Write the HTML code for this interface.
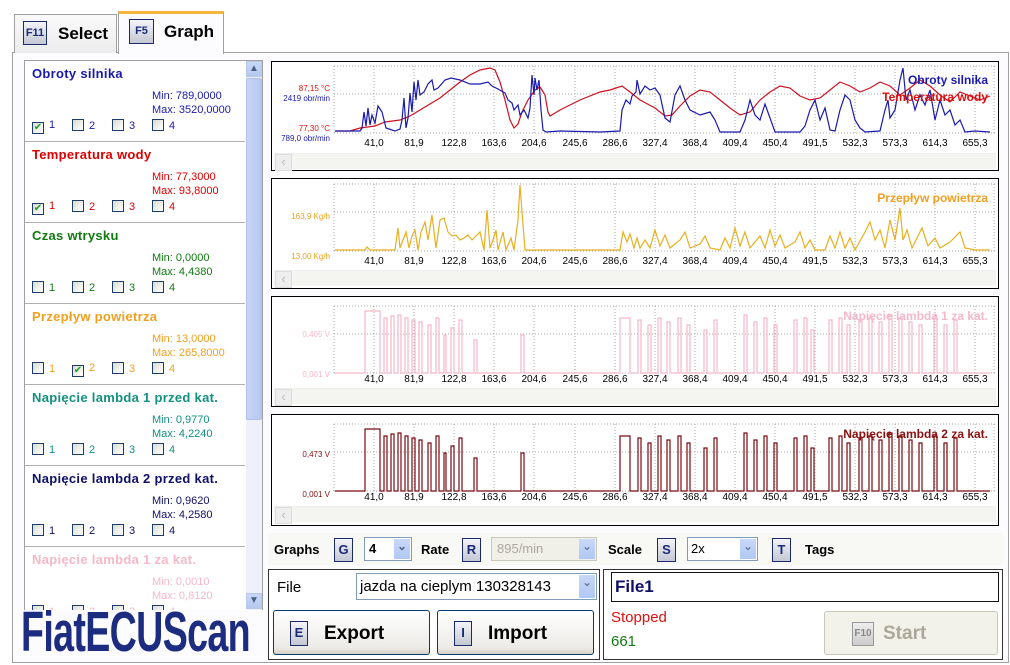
<!DOCTYPE html>
<html><head><meta charset="utf-8"><style>
*{margin:0;padding:0;box-sizing:border-box}
body{width:1010px;height:664px;background:#fff;font-family:"Liberation Sans",Arial,sans-serif;position:relative;overflow:hidden}
.a{position:absolute}
.tab{position:absolute;border:1px solid #a0a0a0;border-bottom:none;background:linear-gradient(#fafafa,#ececec);font-weight:bold;font-size:17px}
.key{position:absolute;border:1px solid #1a2a6a;background:linear-gradient(#f4f4f8,#c4c8d4);font-weight:bold;color:#1a2a7a;text-align:center;font-size:11px}
.item{position:absolute;left:25px;width:220px;height:81px;border-bottom:1px solid #b0b0b0;background:#fff}
.item .t{position:absolute;left:7px;top:5px;font-weight:bold;font-size:13px;letter-spacing:.3px}
.item .m{position:absolute;left:127px;top:28px;font-size:11px;line-height:14px}
.cb{position:absolute;top:58px;font-size:11px}
.cb i{display:inline-block;width:12px;height:12px;border:1px solid #1c3c6c;background:linear-gradient(135deg,#dcdcd4,#fff);vertical-align:-2px;margin-right:5px;font-style:normal;font-size:10px;line-height:10px;color:#21a121;text-align:center}
.chart{position:absolute;left:271px;width:728px;border:1px solid #000;background:#fff}
.sb{position:absolute;left:2px;right:2px;height:16px;background:#f4f4f0;border-top:1px solid #eee}
.sb:before{content:"‹";position:absolute;left:1px;top:0;width:15px;height:15px;border:1px solid #ddd;background:#eee;color:#bbb;font-size:13px;line-height:13px;text-align:center}
.sel{position:absolute;border:1px solid #7f9db9;background:#fff;font-size:13px}
.sel:after{content:"⌄";position:absolute;right:1px;top:1px;bottom:1px;width:16px;background:linear-gradient(#c8d8f8,#b0c8f4);color:#4d6185;font-size:12px;text-align:center;line-height:14px}
.btn{position:absolute;border:1px solid #003c74;border-radius:3px;background:linear-gradient(#fff,#ecebe6 85%,#d6d0c5);font-weight:bold;font-size:19px}
.lab{position:absolute;font-weight:bold;font-size:13px;top:542px}
</style></head><body>
<div class="a" style="left:12px;top:52px;width:997px;height:611px;border:1px solid #a0a0a0;background:#fcfcfe"></div>
<div class="tab" style="left:14px;top:14px;width:103px;height:39px"><div class="key" style="left:8px;top:6px;width:24px;height:24px;line-height:22px">F11</div><span class="a" style="left:43px;top:9px">Select</span></div>
<div class="tab" style="left:118px;top:11px;width:106px;height:43px;background:#fcfcfe;border-top:3px solid #f4b63c"><div class="key" style="left:10px;top:5px;width:25px;height:25px;line-height:22px">F5</div><span class="a" style="left:45px;top:8px">Graph</span></div>
<div class="a" style="left:24px;top:60px;width:239px;height:551px;border:1px solid #a0a0a0;background:#fff;overflow:hidden"></div>
<div class="a" style="left:246px;top:61px;width:16px;height:549px;background:#eef1fb"></div>
<div class="a" style="left:246px;top:61px;width:16px;height:16px;background:linear-gradient(#c8d8f8,#b4c8f0);border:1px solid #b8c8ea;color:#4d6185;font-size:10px;text-align:center;line-height:14px">▲</div>
<div class="a" style="left:246px;top:78px;width:16px;height:342px;background:linear-gradient(90deg,#c6d4f7,#b6c8f2);border:1px solid #b0c0e6;border-radius:2px"></div>
<div class="a" style="left:246px;top:593px;width:16px;height:16px;background:linear-gradient(#c8d8f8,#b4c8f0);border:1px solid #b8c8ea;color:#4d6185;font-size:10px;text-align:center;line-height:14px">▼</div>

<div class="item" style="top:61px;color:#1a1aa8"><div class="t">Obroty silnika</div><div class="m">Min: 789,0000<br>Max: 3520,0000</div><div class="cb" style="left:7px"><i>✔</i>1</div><div class="cb" style="left:47px"><i></i>2</div><div class="cb" style="left:87px"><i></i>3</div><div class="cb" style="left:127px"><i></i>4</div></div>
<div class="item" style="top:142px;color:#dd0000"><div class="t">Temperatura wody</div><div class="m">Min: 77,3000<br>Max: 93,8000</div><div class="cb" style="left:7px"><i>✔</i>1</div><div class="cb" style="left:47px"><i></i>2</div><div class="cb" style="left:87px"><i></i>3</div><div class="cb" style="left:127px"><i></i>4</div></div>
<div class="item" style="top:223px;color:#107a10"><div class="t">Czas wtrysku</div><div class="m">Min: 0,0000<br>Max: 4,4380</div><div class="cb" style="left:7px"><i></i>1</div><div class="cb" style="left:47px"><i></i>2</div><div class="cb" style="left:87px"><i></i>3</div><div class="cb" style="left:127px"><i></i>4</div></div>
<div class="item" style="top:304px;color:#f0a020"><div class="t">Przepływ powietrza</div><div class="m">Min: 13,0000<br>Max: 265,8000</div><div class="cb" style="left:7px"><i></i>1</div><div class="cb" style="left:47px"><i>✔</i>2</div><div class="cb" style="left:87px"><i></i>3</div><div class="cb" style="left:127px"><i></i>4</div></div>
<div class="item" style="top:385px;color:#129080"><div class="t">Napięcie lambda 1 przed kat.</div><div class="m">Min: 0,9770<br>Max: 4,2240</div><div class="cb" style="left:7px"><i></i>1</div><div class="cb" style="left:47px"><i></i>2</div><div class="cb" style="left:87px"><i></i>3</div><div class="cb" style="left:127px"><i></i>4</div></div>
<div class="item" style="top:466px;color:#101068"><div class="t">Napięcie lambda 2 przed kat.</div><div class="m">Min: 0,9620<br>Max: 4,2580</div><div class="cb" style="left:7px"><i></i>1</div><div class="cb" style="left:47px"><i></i>2</div><div class="cb" style="left:87px"><i></i>3</div><div class="cb" style="left:127px"><i></i>4</div></div>
<div class="item" style="top:547px;height:63px;border:none;color:#f5b8c8;overflow:hidden"><div class="t">Napięcie lambda 1 za kat.</div><div class="m">Min: 0,0010<br>Max: 0,8120</div><div class="cb" style="left:7px"><i></i>1</div><div class="cb" style="left:47px"><i></i>2</div><div class="cb" style="left:87px"><i></i>3</div><div class="cb" style="left:127px"><i></i>4</div></div>
<div class="a" style="left:14px;top:610px;width:250px;height:52px;background:#fcfcfe"></div>
<div class="a" style="left:21px;top:599px;font-size:57px;font-weight:bold;color:#1c2c80;transform:scaleX(.66);transform-origin:0 0;letter-spacing:-1px;white-space:nowrap">FiatECUScan</div>

<div class="chart" style="top:61px;height:110px"><div class="sb" style="top:91px"></div></div>
<div class="chart" style="top:178px;height:111px"><div class="sb" style="top:91px"></div></div>
<div class="chart" style="top:296px;height:111px"><div class="sb" style="top:91px"></div></div>
<div class="chart" style="top:414px;height:112px"><div class="sb" style="top:91px"></div></div>

<svg class="a" style="left:0;top:0" width="1010" height="664" font-family="Liberation Sans, Arial, sans-serif">
<defs>
<g id="grid" stroke="#a8a8a8" stroke-width="1" stroke-dasharray="1,2" fill="none">
<path d="M334,0V67M374,0V67M414,0V67M454,0V67M494,0V67M534,0V67M575,0V67M615,0V67M655,0V67M695,0V67M735,0V67M775,0V67M815,0V67M855,0V67M895,0V67M935,0V67M975,0V67M994,0V67M334,0H995M334,28H995M334,67H995"/>
</g>
<path id="pulse" d="M335,373 H365 V311 H380 V373 H384 V318 H387 V373 H391 V316 H394 V373 H398 V315 H401 V373 H405 V318 H408 V373 H412 V320 H415 V373 H419 V322 H422 V373 H428 V325 H431 V373 H436 V318 H439 V373 H444 V335 H446 V373 H451 V328 H454 V373 H459 V320 H462 V373 H474 V340 H477 V373 H521 V335 H524 V373 H620 V318 H630 V373 H638 V320 H641 V373 H648 V325 H651 V373 H658 V318 H661 V373 H667 V322 H670 V373 H678 V318 H681 V373 H687 V325 H690 V373 H704 V330 H707 V373 H714 V320 H717 V373 H744 V315 H747 V373 H754 V322 H757 V373 H764 V318 H767 V373 H774 V325 H777 V373 H794 V320 H797 V373 H804 V318 H807 V373 H811 V330 H814 V373 H829 V320 H832 V373 H839 V318 H842 V373 H847 V325 H850 V373 H859 V320 H862 V373 H869 V318 H872 V373 H879 V322 H882 V373 H889 V315 H892 V373 H899 V318 H902 V373 H909 V322 H912 V373 H919 V325 H922 V373 H934 V318 H937 V373 H944 V325 H947 V373 H954 V320 H957 V373 H990" fill="none"/>
</defs>
<use href="#grid" transform="translate(0,66)"/>
<use href="#grid" transform="translate(0,184)"/>
<use href="#grid" transform="translate(0,306)"/>
<use href="#grid" transform="translate(0,424)"/>
<g fill="none" stroke-width="1.2">
<path stroke="#cc1020" d="M335,131 L350,131 L360,128 L375,126 L385,122 L400,120 L410,116 L420,110 L430,104 L440,98 L450,90 L460,82 L470,75 L480,70 L490,68 L495,70 L500,82 L505,100 L510,120 L514,128 L518,124 L522,112 L528,100 L535,90 L540,87 L545,95 L548,112 L550,116 L560,110 L580,100 L600,92 L610,90 L622,86 L630,92 L640,100 L655,108 L665,116 L672,115 L680,106 L690,96 L700,90 L710,92 L720,100 L730,108 L740,115 L750,112 L760,100 L770,92 L780,86 L790,88 L800,96 L810,100 L820,98 L830,90 L840,82 L850,86 L860,92 L870,88 L880,82 L890,86 L900,95 L910,88 L920,80 L930,86 L940,95 L950,102 L960,92 L970,96 L980,100 L990,96"/>
<path stroke="#1a1ab0" d="M335,131 L360,131 L362,128 L364,112 L366,126 L368,108 L370,125 L372,115 L375,123 L378,106 L382,112 L386,128 L395,131 L400,129 L402,120 L404,98 L406,128 L408,118 L410,93 L412,112 L414,82 L416,100 L418,80 L420,95 L424,92 L428,84 L432,80 L434,90 L438,88 L445,80 L451,78 L460,80 L470,84 L480,84 L488,82 L492,86 L498,89 L505,93 L508,100 L512,103 L514,110 L518,105 L520,115 L524,110 L528,118 L530,108 L532,75 L534,95 L535,78 L537,90 L539,80 L541,110 L543,130 L546,132 L560,131 L600,132 L620,131 L622,110 L626,100 L630,104 L632,96 L636,92 L637,80 L640,94 L645,86 L650,90 L655,88 L660,95 L665,118 L670,122 L675,95 L680,86 L685,100 L690,110 L700,115 L710,112 L715,120 L720,132 L740,132 L745,120 L750,100 L755,115 L760,120 L765,104 L770,118 L775,132 L800,132 L805,126 L810,110 L815,100 L820,120 L825,108 L830,130 L835,131 L840,110 L845,95 L850,100 L855,120 L860,128 L865,132 L880,131 L885,110 L888,100 L890,118 L895,110 L900,80 L903,68 L906,100 L910,90 L915,110 L920,95 L925,105 L930,90 L935,120 L940,100 L945,115 L950,110 L955,125 L960,120 L965,132 L975,131 L990,132"/>
<path stroke="#e8b020" d="M335,250 L365,250 L367,247 L370,250 L395,250 L398,228 L400,248 L403,240 L406,232 L409,248 L412,236 L415,230 L418,250 L421,232 L425,222 L428,240 L432,215 L436,248 L440,220 L444,218 L448,232 L452,236 L456,235 L460,240 L464,238 L468,235 L472,240 L476,236 L480,232 L484,250 L487,210 L490,248 L493,240 L496,230 L498,250 L503,232 L506,250 L511,238 L514,250 L518,220 L520,185 L522,212 L525,250 L560,250 L620,250 L623,232 L627,242 L630,234 L634,248 L637,238 L640,248 L645,240 L650,248 L655,230 L660,246 L665,235 L670,248 L680,240 L685,232 L690,248 L700,244 L705,236 L710,248 L720,250 L725,238 L730,248 L735,228 L740,246 L745,232 L750,248 L760,236 L765,248 L770,230 L775,246 L780,235 L785,248 L795,242 L800,232 L805,248 L810,240 L815,250 L825,250 L830,236 L835,248 L840,232 L845,248 L850,238 L855,250 L865,232 L870,222 L875,240 L880,230 L885,248 L890,220 L895,240 L900,208 L903,240 L907,230 L912,248 L918,236 L922,228 L928,246 L935,238 L940,248 L950,242 L960,232 L965,248 L975,250 L990,250"/>
<use href="#pulse" stroke="#f5b8c8"/>
<use href="#pulse" stroke="#7a0a10" transform="translate(0,118)"/>
</g>
<g font-size="10" text-anchor="middle" fill="#000">
<text y="146"><tspan x="374">41,0</tspan><tspan x="414">81,9</tspan><tspan x="454">122,8</tspan><tspan x="494">163,6</tspan><tspan x="534">204,6</tspan><tspan x="575">245,6</tspan><tspan x="615">286,6</tspan><tspan x="655">327,4</tspan><tspan x="695">368,4</tspan><tspan x="735">409,4</tspan><tspan x="775">450,4</tspan><tspan x="815">491,5</tspan><tspan x="855">532,3</tspan><tspan x="895">573,3</tspan><tspan x="935">614,3</tspan><tspan x="975">655,3</tspan></text>
<text y="264"><tspan x="374">41,0</tspan><tspan x="414">81,9</tspan><tspan x="454">122,8</tspan><tspan x="494">163,6</tspan><tspan x="534">204,6</tspan><tspan x="575">245,6</tspan><tspan x="615">286,6</tspan><tspan x="655">327,4</tspan><tspan x="695">368,4</tspan><tspan x="735">409,4</tspan><tspan x="775">450,4</tspan><tspan x="815">491,5</tspan><tspan x="855">532,3</tspan><tspan x="895">573,3</tspan><tspan x="935">614,3</tspan><tspan x="975">655,3</tspan></text>
<text y="382"><tspan x="374">41,0</tspan><tspan x="414">81,9</tspan><tspan x="454">122,8</tspan><tspan x="494">163,6</tspan><tspan x="534">204,6</tspan><tspan x="575">245,6</tspan><tspan x="615">286,6</tspan><tspan x="655">327,4</tspan><tspan x="695">368,4</tspan><tspan x="735">409,4</tspan><tspan x="775">450,4</tspan><tspan x="815">491,5</tspan><tspan x="855">532,3</tspan><tspan x="895">573,3</tspan><tspan x="935">614,3</tspan><tspan x="975">655,3</tspan></text>
<text y="500"><tspan x="374">41,0</tspan><tspan x="414">81,9</tspan><tspan x="454">122,8</tspan><tspan x="494">163,6</tspan><tspan x="534">204,6</tspan><tspan x="575">245,6</tspan><tspan x="615">286,6</tspan><tspan x="655">327,4</tspan><tspan x="695">368,4</tspan><tspan x="735">409,4</tspan><tspan x="775">450,4</tspan><tspan x="815">491,5</tspan><tspan x="855">532,3</tspan><tspan x="895">573,3</tspan><tspan x="935">614,3</tspan><tspan x="975">655,3</tspan></text>
</g>
<g font-size="8" text-anchor="end">
<text x="330" y="91" fill="#dd1010">87,15 °C</text><text x="330" y="101" fill="#1a1ab0">2419 obr/min</text>
<text x="330" y="131" fill="#dd1010">77,30 °C</text><text x="330" y="141" fill="#1a1ab0">789,0 obr/min</text>
<text x="330" y="219" fill="#f0a020">163,9 Kg/h</text><text x="330" y="259" fill="#f0a020">13,00 Kg/h</text>
<text x="330" y="337" fill="#f5b8c8">0,405 V</text><text x="330" y="377" fill="#f5b8c8">0,001 V</text>
<text x="330" y="457" fill="#8b1010">0,473 V</text><text x="330" y="497" fill="#8b1010">0,001 V</text>
</g>
<g font-size="12" font-weight="bold" text-anchor="end">
<text x="988" y="84" fill="#1a1ab0">Obroty silnika</text>
<text x="988" y="101" fill="#dd1010">Temperatura wody</text>
<text x="988" y="202" fill="#f0a020">Przepływ powietrza</text>
<text x="988" y="320" fill="#f5b8c8">Napięcie lambda 1 za kat.</text>
<text x="988" y="438" fill="#8b1010">Napięcie lambda 2 za kat.</text>
</g>
</svg>

<div class="a" style="left:268px;top:533px;width:735px;height:32px;background:#f8f8f4"></div>
<div class="lab" style="left:274px">Graphs</div>
<div class="key" style="left:334px;top:538px;width:19px;height:24px;line-height:22px;font-size:13px">G</div>
<div class="sel" style="left:364px;top:537px;width:48px;height:24px;padding:3px 4px;font-weight:bold">4</div>
<div class="lab" style="left:421px">Rate</div>
<div class="key" style="left:462px;top:538px;width:19px;height:24px;line-height:22px;font-size:13px">R</div>
<div class="sel" style="left:491px;top:537px;width:106px;height:24px;padding:3px 5px;color:#aca899;background:#f0efe8;border-color:#c9c7ba">895/min</div>
<div class="lab" style="left:608px">Scale</div>
<div class="key" style="left:657px;top:538px;width:19px;height:24px;line-height:22px;font-size:13px">S</div>
<div class="sel" style="left:687px;top:537px;width:71px;height:24px;padding:3px 3px">2x</div>
<div class="key" style="left:772px;top:538px;width:19px;height:24px;line-height:22px;font-size:13px">T</div>
<div class="lab" style="left:805px">Tags</div>

<div class="a" style="left:268px;top:569px;width:332px;height:91px;border:1px solid #333;background:#fff"></div>
<div class="a" style="left:277px;top:579px;font-size:15px">File</div>
<div class="sel" style="left:356px;top:573px;width:241px;height:27px;padding:4px 3px;font-size:15px;overflow:hidden;white-space:nowrap">jazda na cieplym 130328143</div>
<div class="btn" style="left:273px;top:610px;width:157px;height:45px"><div class="key" style="left:16px;top:10px;width:18px;height:25px;line-height:22px;font-size:13px">E</div><span class="a" style="left:50px;top:12px">Export</span></div>
<div class="btn" style="left:437px;top:610px;width:157px;height:45px"><div class="key" style="left:16px;top:10px;width:18px;height:25px;line-height:22px;font-size:13px">I</div><span class="a" style="left:50px;top:12px">Import</span></div>

<div class="a" style="left:603px;top:569px;width:400px;height:91px;border:1px solid #333;background:#fff"></div>
<div class="a" style="left:611px;top:572px;width:388px;height:30px;border:1px solid #111;font-weight:bold;font-size:17px;color:#101068;padding:4px 3px">File1</div>
<div class="a" style="left:611px;top:609px;font-size:15px;color:#dd1010">Stopped</div>
<div class="a" style="left:611px;top:633px;font-size:15px;color:#107a10">661</div>
<div class="btn" style="left:824px;top:611px;width:174px;height:44px;border-color:#c9c7ba;background:#f2f1ea;color:#aca899"><div class="key" style="left:27px;top:10px;width:22px;height:24px;line-height:22px;font-size:10px;color:#888;border-color:#999;background:linear-gradient(#eee,#ccc)">F10</div><span class="a" style="left:58px;top:11px">Start</span></div>
</body></html>
